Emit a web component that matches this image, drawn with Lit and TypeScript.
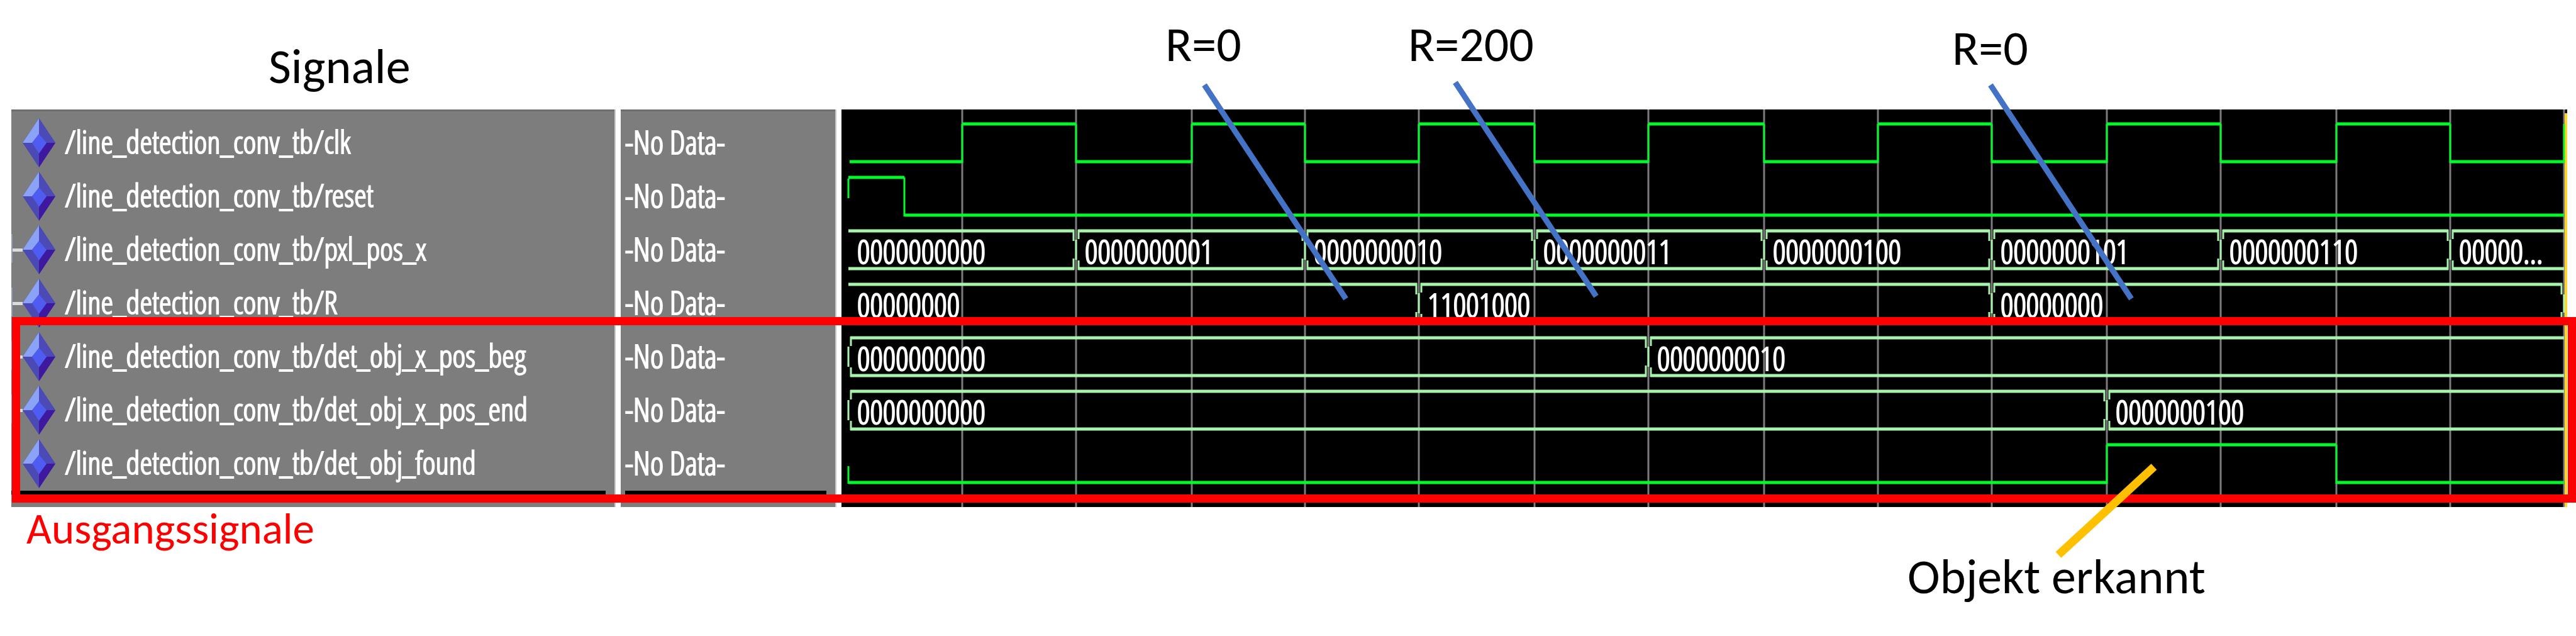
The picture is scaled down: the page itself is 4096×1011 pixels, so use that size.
import { LitElement, html, css, svg } from "lit";
import { customElement } from "lit/decorators.js";

/** Horizontal extent of the time axis in drawing units. */
const SPAN = 2744;
const START = 11;
const END = 2739;
const HIGH = 15;
const LOW = 75;

const EDGES = [192, 373, 557, 737, 918, 1102, 1283, 1467, 1648, 1829, 2012, 2193, 2377, 2558, END];

interface BusValue {
  at: number;
  text: string;
}

interface Signal {
  name: string;
  expandable?: boolean;
  /** Level changes of a single bit: [time, level]. */
  bits?: Array<[number, number]>;
  /** Short tick from the middle of the row at the start. */
  tick?: boolean;
  bus?: BusValue[];
  /** Bus is opened with a bracket at the start. */
  opened?: boolean;
  /** Bus changes again at the right end. */
  closed?: boolean;
}

const clock: Array<[number, number]> = [
  [13, 0],
  ...EDGES.map((x, i): [number, number] => [x, i % 2 === 0 ? 1 : 0]),
];

const SIGNALS: Signal[] = [
  { name: "/line_detection_conv_tb/clk", bits: clock },
  { name: "/line_detection_conv_tb/reset", tick: true, bits: [[START, 1], [100, 0]] },
  {
    name: "/line_detection_conv_tb/pxl_pos_x",
    expandable: true,
    bus: [
      { at: START, text: "0000000000" },
      { at: 373, text: "0000000001" },
      { at: 737, text: "0000000010" },
      { at: 1102, text: "0000000011" },
      { at: 1467, text: "0000000100" },
      { at: 1829, text: "0000000101" },
      { at: 2193, text: "0000000110" },
      { at: 2558, text: "00000..." },
    ],
  },
  {
    name: "/line_detection_conv_tb/R",
    expandable: true,
    closed: true,
    bus: [
      { at: START, text: "00000000" },
      { at: 918, text: "11001000" },
      { at: 1829, text: "00000000" },
    ],
  },
  {
    name: "/line_detection_conv_tb/det_obj_x_pos_beg",
    expandable: true,
    opened: true,
    bus: [
      { at: START, text: "0000000000" },
      { at: 1283, text: "0000000010" },
    ],
  },
  {
    name: "/line_detection_conv_tb/det_obj_x_pos_end",
    expandable: true,
    opened: true,
    bus: [
      { at: START, text: "0000000000" },
      { at: 2012, text: "0000000100" },
    ],
  },
  { name: "/line_detection_conv_tb/det_obj_found", tick: true, bits: [[START, 0], [2012, 1], [2377, 0]] },
];

@customElement("signal-gem")
class SignalGem extends LitElement {
  static styles = css`
    :host { display: block; flex: none; width: 52px; height: 78px; }
    .gem { display: block; width: 100%; height: 100%; }
  `;

  render() {
    return html`<svg class="gem" viewBox="0 0 52 78" aria-hidden="true">
      <path d="M26 0 52 39 26 78 0 39Z" fill="#4b4ab4" />
      <path d="M26 0V25L15 39H0Z" fill="#8ba3f7" />
      <path d="M26 0V25L37 39H52Z" fill="#4b4ab6" />
      <path d="M52 39H38L26 55V78Z" fill="#3f18a0" />
      <path d="M26 25 38 39 26 56 15 39Z" fill="#4f5cf2" />
    </svg>`;
  }
}

@customElement("signal-wave")
class SignalWave extends LitElement {
  static properties = { signal: { attribute: false } };
  declare signal: Signal;

  static styles = css`
    :host { display: block; position: relative; height: 85px; }
    .trace { position: absolute; inset: 0; width: 100%; height: 100%; overflow: visible; }
    .trace path { fill: none; vector-effect: non-scaling-stroke; }
    .flat { stroke-width: 5px; }
    .edge { stroke-width: 3px; }
    .bit { stroke: #02fa2a; }
    .bus { stroke: #a6f3aa; }
    .values { position: relative; display: flex; padding-top: 11px; }
    .value {
      flex: 1 1 0;
      min-width: 0;
      box-sizing: border-box;
      padding-left: 14px;
      overflow: hidden;
      white-space: nowrap;
      line-height: 72px;
    }
    .lead { flex: 1 1 0; }
  `;

  private bitTrace(bits: Array<[number, number]>) {
    let flat = "";
    let edge = this.signal.tick ? `M${START} ${bits[0][1] ? 17 : 49}V${bits[0][1] ? 48 : LOW + 2}` : "";
    bits.forEach(([x, level], i) => {
      const y = level ? HIGH : LOW;
      const next = i + 1 < bits.length ? bits[i + 1][0] : END;
      if (next > x) flat += `M${x} ${y}H${next}`;
      if (i > 0) edge += `M${x} ${HIGH}V${LOW + 2}`;
    });
    return svg`<path class="flat bit" d=${flat} /><path class="edge bit" d=${edge} />`;
  }

  private busTrace(bus: BusValue[]) {
    let flat = "";
    let edge = "";
    bus.forEach(({ at }, i) => {
      const last = i + 1 === bus.length;
      const next = last ? END : bus[i + 1].at;
      const from = i > 0 || this.signal.opened ? at + 3 : at;
      const to = last && !this.signal.closed ? next : next - 3;
      flat += `M${from} ${HIGH}H${to}M${from} ${LOW}H${to}`;
      if (i > 0 || this.signal.opened) {
        edge += `M${at + 4} 13V28M${at} 29V61M${at + 4} 62V77`;
      }
      if (!last || this.signal.closed) {
        edge += `M${next - 4} 13V31M${next} 31V60M${next - 4} 59V77`;
      }
    });
    return svg`<path class="flat bus" d=${flat} /><path class="edge bus" d=${edge} />`;
  }

  render() {
    const { bits, bus } = this.signal;
    return html`
      <svg class="trace" viewBox="0 0 ${SPAN} 85" preserveAspectRatio="none" aria-hidden="true">
        ${bits ? this.bitTrace(bits) : bus ? this.busTrace(bus) : null}
      </svg>
      ${bus
        ? html`<div class="values">
            <span class="lead" style="flex-grow:${START}"></span>
            ${bus.map(({ at, text }, i) => {
              const next = i + 1 < bus.length ? bus[i + 1].at : SPAN;
              return html`<span class="value" style="flex-grow:${next - at - 14}">${text}</span>`;
            })}
          </div>`
        : null}
    `;
  }
}

@customElement("app-root")
class AppRoot extends LitElement {
  static styles = css`
    :host {
      display: block;
      background: #fff;
      color: #000;
      font-family: Carlito, Lato, "Open Sans", sans-serif;
      font-size: 78px;
      line-height: 80px;
    }
    .stage { position: relative; min-height: 100vh; overflow: hidden; }
    .head { box-sizing: border-box; height: 174px; padding: 66px 0 0 427px; }
    .title { margin: 0; font-size: inherit; font-weight: 400; }
    .foot { padding: 2px 0 137px 42px; }
    .outputs { margin: 0; font-size: 69px; line-height: 66px; color: #f00; }

    .viewer {
      display: grid;
      grid-template-columns: minmax(0, 969fr) minmax(0, 351fr) minmax(0, 2744fr);
      margin: 0 14px 0 18px;
      height: 632px;
      color: #fff;
      font-family: "Open Sans Condensed Light", "Roboto Condensed", "DejaVu Sans Condensed", sans-serif;
      font-size: 51px;
      -webkit-text-stroke: 2px currentColor;
    }
    .pane { box-sizing: border-box; background: #7d7d7d; padding-top: 8px; }
    .list { border-right: 8px solid #fff; box-shadow: inset -2px 0 #c8c8c8, inset 0 3px #6e6e6e; }
    .row { display: flex; align-items: center; height: 85px; line-height: 82px; white-space: nowrap; }
    .rule { height: 6px; margin: 3px 16px 0 0; background: #000; }
    .values .rule { margin-left: 7px; }
    .branch { position: relative; flex: none; width: 18px; height: 46px; border-left: 2px solid transparent; box-sizing: border-box; }
    .branch.on { border-left-color: #8d9ab8; }
    .branch.on::after { content: ""; display: block; height: 5px; margin-top: 23px; background: #dcdcdc; }
    signal-gem { margin-top: 4px; }
    .name { padding-left: 15px; font-size: 50px; }
    .value { padding-left: 7px; }

    .waves { position: relative; background: #000; }
    .grid { position: absolute; inset: 0; width: 100%; height: 100%; }
    .grid path { stroke: #7f7a7f; stroke-width: 3px; vector-effect: non-scaling-stroke; }
    .cursor { position: absolute; top: 6px; right: 0; bottom: 0; width: 4px; background: #ffd428; }

    .frame {
      position: absolute;
      box-sizing: border-box;
      top: 504px;
      left: 19px;
      right: 0;
      height: 295px;
      border: 13px solid #f00;
    }
    .leaders { position: absolute; inset: 0; width: 100%; height: 1011px; }
    .leader { stroke: #4472c4; stroke-width: 9; }
    .leader.found { stroke: #ffc000; stroke-width: 13; }
    .note { position: absolute; white-space: nowrap; }
  `;

  private notes = [
    { text: "R=0", left: 1853, top: 31 },
    { text: "R=200", left: 2239, top: 31 },
    { text: "R=0", left: 3104, top: 37 },
    { text: "Objekt erkannt", left: 3033, top: 877 },
  ];

  render() {
    return html`
      <main class="stage">
        <header class="head"><h1 class="title">Signale</h1></header>

        <section class="viewer">
          <div class="pane list">
            ${SIGNALS.map(
              (s) => html`<div class="row">
                <span class="branch ${s.expandable ? "on" : ""}"></span>
                <signal-gem></signal-gem>
                <span class="name">${s.name}</span>
              </div>`
            )}
            <div class="rule"></div>
          </div>
          <div class="pane list values">
            ${SIGNALS.map(() => html`<div class="row"><span class="value">-No Data-</span></div>`)}
            <div class="rule"></div>
          </div>
          <div class="pane waves">
            <svg class="grid" viewBox="0 0 ${SPAN} 632" preserveAspectRatio="none" aria-hidden="true">
              <path d=${EDGES.map((x) => `M${x} 0V632`).join("")} />
            </svg>
            <div class="cursor"></div>
            ${SIGNALS.map((s) => html`<signal-wave .signal=${s}></signal-wave>`)}
          </div>
        </section>

        <footer class="foot"><p class="outputs">Ausgangssignale</p></footer>

        <div class="frame"></div>
        <svg class="leaders" viewBox="0 0 4096 1011" preserveAspectRatio="none" aria-hidden="true">
          <path class="leader" d="M1915 135 2140 475" />
          <path class="leader" d="M2314 131 2538 471" />
          <path class="leader" d="M3165 135 3389 475" />
          <path class="leader found" d="M3273 882 3425 742" />
        </svg>
        ${this.notes.map(
          (n) => html`<span class="note" style="left:${(n.left / 4096) * 100}%;top:${n.top}px">${n.text}</span>`
        )}
      </main>
    `;
  }
}
